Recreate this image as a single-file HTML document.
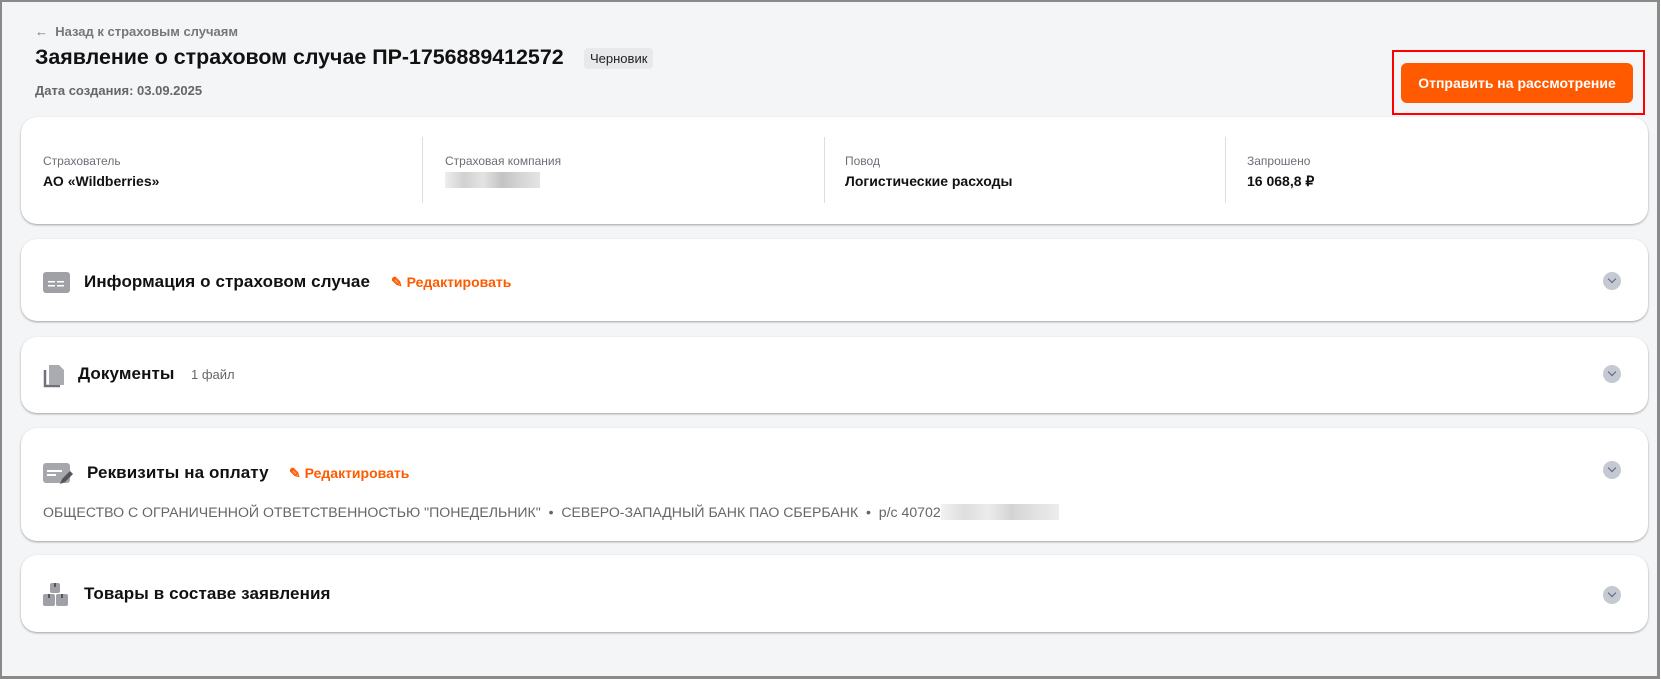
<!DOCTYPE html>
<html><head><meta charset="utf-8"><style>
*{box-sizing:border-box;margin:0;padding:0}
body{width:1661px;height:679px;background:#fff;font-family:"Liberation Sans",sans-serif;overflow:hidden;position:relative}
.frame{position:absolute;left:0;top:0;width:1660px;height:679px;background:#f4f5f7;border:2px solid #8a8a8a;border-right-width:3px;border-bottom-width:3px}
.abs{position:absolute}
.card{position:absolute;left:21px;width:1627px;background:#fff;border-radius:16px;box-shadow:0 1px 2px rgba(0,0,0,.35)}
.lbl{font-size:12px;color:#6b6f76}
.val{font-size:14px;color:#111;font-weight:bold}
.sec{position:absolute;font-size:17px;color:#111;font-weight:bold;letter-spacing:.1px}
.edit{position:absolute;font-size:14px;color:#ff5a00;font-weight:bold}
.chev{position:absolute;width:18px;height:18px;border-radius:50%;background:#c4c9d2}
.chev:after{content:"";position:absolute;left:6px;top:4px;width:5px;height:5px;border-right:1.5px solid #5a6275;border-bottom:1.5px solid #5a6275;transform:rotate(45deg)}
.blur{position:absolute;background:linear-gradient(90deg,#e6e6e6,#bdbdbd,#d8d8d8,#a9a9a9,#c4c4c4,#d9d9d9)}
</style></head><body>
<div class="frame"></div>
<div class="abs" style="left:35px;top:24px;font-size:13px;color:#777;font-weight:bold">← &nbsp;Назад к страховым случаям</div>
<div class="abs" style="left:35px;top:45px;font-size:21.4px;font-weight:bold;color:#111">Заявление о страховом случае ПР-1756889412572</div>
<div class="abs" style="left:584px;top:48px;height:21px;padding:0 6px;background:#e8e9eb;border-radius:4px;font-size:13px;line-height:21px;color:#222">Черновик</div>
<div class="abs" style="left:35px;top:83px;font-size:13px;color:#666;font-weight:bold">Дата создания: 03.09.2025</div>
<div class="abs" style="left:1392px;top:50px;width:253px;height:65px;border:2px solid #f00"></div>
<div class="abs" style="left:1401px;top:63px;width:232px;height:40px;background:#ff5a00;border-radius:6px;color:#fff;font-size:14px;font-weight:bold;text-align:center;line-height:40px">Отправить на рассмотрение</div>

<div class="card" style="top:117px;height:107px">
<div class="abs" style="left:401px;top:20px;width:1px;height:66px;background:#ddd"></div>
<div class="abs" style="left:803px;top:20px;width:1px;height:66px;background:#ddd"></div>
<div class="abs" style="left:1204px;top:20px;width:1px;height:66px;background:#ddd"></div>
<div class="abs lbl" style="left:22px;top:37px">Страхователь</div>
<div class="abs val" style="left:22px;top:56px">АО «Wildberries»</div>
<div class="abs lbl" style="left:424px;top:37px">Страховая компания</div>
<div class="blur" style="left:424px;top:55px;width:95px;height:16px;opacity:.7"></div>
<div class="abs lbl" style="left:824px;top:37px">Повод</div>
<div class="abs val" style="left:824px;top:56px">Логистические расходы</div>
<div class="abs lbl" style="left:1226px;top:37px">Запрошено</div>
<div class="abs val" style="left:1226px;top:56px">16 068,8 ₽</div>
</div>

<div class="card" style="top:239px;height:82px">
<svg class="abs" style="left:22px;top:33px" width="27" height="22"><rect width="27" height="21" rx="3" fill="#9fa1a6"/><rect x="5" y="9" width="7" height="1.5" fill="#fff"/><rect x="14" y="9" width="7" height="1.5" fill="#fff"/><rect x="5" y="13" width="7" height="1.5" fill="#fff"/><rect x="14" y="13" width="7" height="1.5" fill="#fff"/></svg>
<div class="sec" style="left:63px;top:33px">Информация о страховом случае</div>
<div class="edit" style="left:370px;top:35px">✎ Редактировать</div>
<div class="chev" style="left:1582px;top:33px"></div>
</div>

<div class="card" style="top:337px;height:76px">
<svg class="abs" style="left:22px;top:26px" width="22" height="26"><path d="M2 7v16h15" stroke="#6f7278" stroke-width="2.5" fill="none"/><path d="M6 2h10l5 5v15H6z" fill="#a9abb0"/></svg>
<div class="sec" style="left:57px;top:27px">Документы</div>
<div class="abs" style="left:170px;top:30px;font-size:13px;color:#666">1 файл</div>
<div class="chev" style="left:1582px;top:28px"></div>
</div>

<div class="card" style="top:428px;height:113px">
<svg class="abs" style="left:22px;top:35px" width="30" height="22"><rect width="27" height="20" rx="3" fill="#a5a7ac"/><rect x="4" y="7" width="15" height="2" fill="#fff"/><rect x="4" y="11" width="9" height="2" fill="#fff"/><path d="M17 21l2-5 8-8 3 3-8 8z" fill="#555"/></svg>
<div class="sec" style="left:66px;top:35px">Реквизиты на оплату</div>
<div class="edit" style="left:268px;top:37px">✎ Редактировать</div>
<div class="abs" style="left:22px;top:76px;font-size:14.1px;color:#666">ОБЩЕСТВО С ОГРАНИЧЕННОЙ ОТВЕТСТВЕННОСТЬЮ "ПОНЕДЕЛЬНИК" &nbsp;•&nbsp; СЕВЕРО-ЗАПАДНЫЙ БАНК ПАО СБЕРБАНК &nbsp;•&nbsp; р/с 40702</div>
<div class="blur" style="left:920px;top:76px;width:118px;height:16px;opacity:.5"></div>
<div class="chev" style="left:1582px;top:33px"></div>
</div>

<div class="card" style="top:555px;height:77px">
<svg class="abs" style="left:21px;top:27px" width="28" height="26"><rect x="8" y="1" width="10" height="10" rx="2" fill="#9fa1a6"/><rect x="1" y="12" width="12" height="12" rx="2" fill="#9fa1a6"/><rect x="14" y="12" width="12" height="12" rx="2" fill="#9fa1a6"/><rect x="12" y="1" width="2" height="4" fill="#555"/><rect x="6" y="12" width="2" height="4" fill="#555"/><rect x="19" y="12" width="2" height="4" fill="#555"/></svg>
<div class="sec" style="left:63px;top:29px">Товары в составе заявления</div>
<div class="chev" style="left:1582px;top:31px"></div>
</div>
</body></html>
